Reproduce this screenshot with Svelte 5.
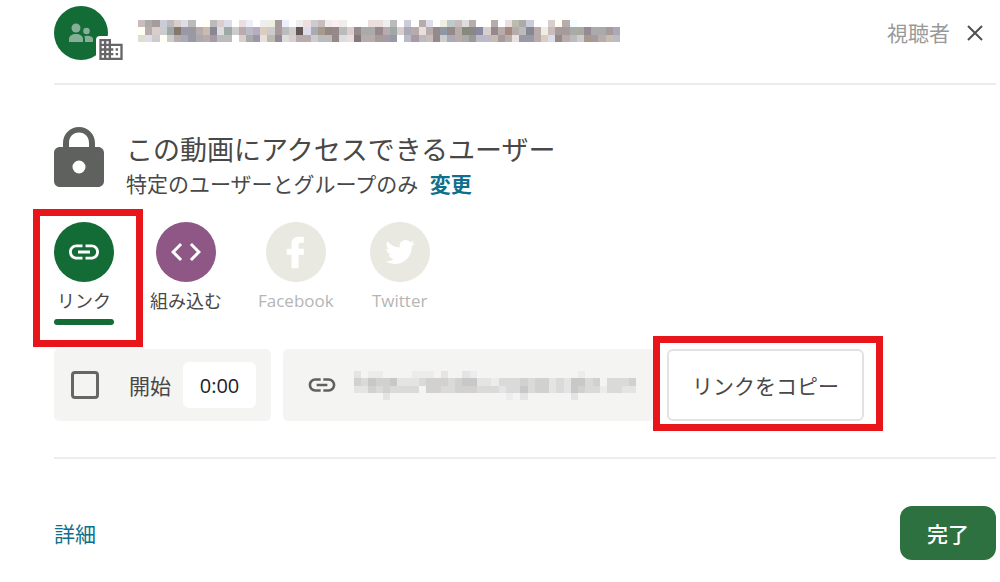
<script lang="ts">
  type Tab = { id: string; label: string; color: string; disabled: boolean };

  const LINK_PATH =
    'M3.9 12c0-1.71 1.39-3.1 3.1-3.1h4V7H7c-2.76 0-5 2.24-5 5s2.24 5 5 5h4v-1.9H7c-1.71 0-3.1-1.39-3.1-3.1zM8 13h8v-2H8v2zm9-6h-4v1.9h4c1.71 0 3.1 1.39 3.1 3.1s-1.39 3.1-3.1 3.1h-4V17h4c2.76 0 5-2.24 5-5s-2.24-5-5-5z';

  const TABS: Tab[] = [
    { id: 'link', label: 'リンク', color: '#136b36', disabled: false },
    { id: 'embed', label: '組み込む', color: '#8e5785', disabled: false },
    { id: 'facebook', label: 'Facebook', color: '#e9e9e1', disabled: true },
    { id: 'twitter', label: 'Twitter', color: '#e9e9e1', disabled: true }
  ];

  // Masked group name, one colour per cell
  const NAME_CELLS = [
    'cbb aaa a99 ccd bbb dcc dde bbb fff ffe bbb dcc dde fff edd eef fff eee eed a99 eef fff eee edd ccc cbb eee fee eee fff fff fff edd edd eee bbb fff ccd fff baa dde fff eed bcc cbb ddd baa fff fff baa fff edd bba aaa ccd fff fff dcc ffe baa eff',
    'ffe baa dcc ccc 9aa 876 99a 99a baa cba 889 ddd 9aa ccc baa bbc bac dcb ccc a99 bbb ccc 655 dde aab a98 987 988 bbb dcc 988 aaa aaa 988 baa 9aa dcc aab baa edd baa 988 89a 988 baa 887 888 88a dcc 988 baa a87 baa bbb 889 baa eed cbb a99 a99 aaa aa9 989 aaa aaa a99 aab',
    'ddc dde ccc ffe ccc baa aab 99a aaa baa a9a bbb bbb fff dcc aaa 99a edd bba 989 ddd dcc baa baa ccc bbb bbb 988 ddd edd 877 baa baa a99 a9a 99a fff bbc a9a bbb cbb 988 ccc aab baa aaa 999 bbc bbc cba a99 baa edd 99a 99a baa dcb dde 988 baa bbb ccc a98 a99 baa cba bbc'
  ].map((row) => row.split(' '));

  // Masked address, darker with each step
  const URL_CELLS = [
    '2.11....111.2..21..............1.......',
    '4354452223444345522133343442325534.3334',
    '224343333.44334443332335344232543313322',
    '....2................1.2......2........'
  ];
  const GREYS = ['#f4f4f2', '#ececec', '#e4e4e4', '#dadada', '#d2d1d0', '#c9c8c9'];

  let activeTab = 'link';
  let startChecked = false;
  let startTime = '0:00';
</script>

<main class="share">
  <header class="header">
    <div class="avatar">
      <svg class="people" viewBox="0 0 24 20" aria-hidden="true">
        <circle cx="7" cy="5" r="4.5" />
        <circle cx="17.5" cy="8" r="3.3" />
        <path d="M0 19v-3c0-3 3-5 7-5s7 2 7 5v3z" />
        <path d="M16 19v-3c0-1-.3-2-.8-2.8 2.5-1.2 8.8-.4 8.8 2.8v3z" />
      </svg>
      <span class="badge">
        <svg viewBox="2 3 20 18" aria-hidden="true">
          <path
            d="M12 7V3H2v18h20V7H12zM6 19H4v-2h2v2zm0-4H4v-2h2v2zm0-4H4V9h2v2zm0-4H4V5h2v2zm4 12H8v-2h2v2zm0-4H8v-2h2v2zm0-4H8V9h2v2zm0-4H8V5h2v2zm10 12h-8v-2h2v-2h-2v-2h2v-2h-2V9h8v10zm-2-8h-2v2h2v-2zm0 4h-2v2h2v-2z"
          />
        </svg>
      </span>
    </div>
    <svg class="masked-name" viewBox="0 0 67 3" preserveAspectRatio="none" shape-rendering="crispEdges" aria-hidden="true">
      {#each NAME_CELLS as row, y}
        {#each row as cell, x}
          <rect {x} {y} width="1" height="1" fill={`#${cell}`} />
        {/each}
      {/each}
    </svg>
    <span class="role">視聴者</span>
    <button type="button" class="close" aria-label="閉じる">
      <svg viewBox="0 0 18 18" aria-hidden="true"><path d="M2 2l14 14M16 2L2 16" /></svg>
    </button>
  </header>

  <section class="access">
    <svg class="lock" viewBox="0 0 50 60" aria-hidden="true">
      <path
        fill-rule="evenodd"
        d="M9 20v-4C9 7 16 0 25 0s16 7 16 16v4h3c3.500 0 6 2.500 6 6v28c0 3.500-2.500 6-6 6H6c-3.500 0-6-2.500-6-6V26c0-3.500 2.500-6 6-6zM15 20h20v-4c0-6-4-10.500-10-10.500S15 10 15 16zM25 33.500a6.500 6.500 0 1 0 0 13 6.500 6.500 0 0 0 0-13z"
      />
    </svg>
    <div class="access-text">
      <h1>この動画にアクセスできるユーザー</h1>
      <p>特定のユーザーとグループのみ <a href="#change">変更</a></p>
    </div>
  </section>

  <div class="tabs" role="tablist">
    {#each TABS as tab}
      <button
        type="button"
        role="tab"
        class="tab"
        class:tab-active={activeTab === tab.id}
        aria-selected={activeTab === tab.id}
        disabled={tab.disabled}
        on:click={() => (activeTab = tab.id)}
      >
        <span class="tab-icon" style:background={tab.color}>
          <svg viewBox="0 0 24 24" aria-hidden="true">
            {#if tab.id === 'link'}
              <path d={LINK_PATH} />
            {:else if tab.id === 'embed'}
              <path d="M9.4 16.6L4.8 12l4.6-4.6L8 6l-6 6 6 6 1.4-1.4zm5.2 0l4.6-4.6-4.6-4.6L16 6l6 6-6 6-1.4-1.4z" />
            {:else if tab.id === 'facebook'}
              <path d="M9 22.800V13.800H5.800V9.800H9V6.800C9 3.300 10.900 1.800 14 1.800h3.200v4h-1.800c-1.300 0-1.700.5-1.700 1.700v2.300h3.500v4h-3.500v9z" />
            {:else}
              <path
                transform="translate(2.2 2.2) scale(.82)"
                d="M23.953 4.57a10 10 0 01-2.825.775 4.958 4.958 0 002.163-2.723c-.951.555-2.005.959-3.127 1.184a4.92 4.92 0 00-8.384 4.482C7.69 8.095 4.067 6.13 1.64 3.162a4.822 4.822 0 00-.666 2.475c0 1.71.87 3.213 2.188 4.096a4.904 4.904 0 01-2.228-.616v.06a4.923 4.923 0 003.946 4.827 4.996 4.996 0 01-2.212.085 4.936 4.936 0 004.604 3.417 9.867 9.867 0 01-6.102 2.105c-.39 0-.779-.023-1.17-.067a13.995 13.995 0 007.557 2.209c9.053 0 13.998-7.496 13.998-13.985 0-.21 0-.42-.015-.63A9.935 9.935 0 0024 4.59z"
              />
            {/if}
          </svg>
        </span>
        <span class="tab-label">{tab.label}</span>
        {#if activeTab === tab.id}
          <span class="tab-bar"></span>
          <span class="marker marker-tab"></span>
        {/if}
      </button>
    {/each}
  </div>

  <div class="controls">
    <div class="panel start">
      <input id="start-at" type="checkbox" bind:checked={startChecked} />
      <label for="start-at">開始</label>
      <input class="time" type="text" aria-label="開始" bind:value={startTime} />
    </div>
    <div class="panel address">
      <svg class="address-icon" viewBox="0 0 24 24" aria-hidden="true"><path d={LINK_PATH} /></svg>
      <svg class="masked-url" viewBox="0 0 39 4" preserveAspectRatio="none" shape-rendering="crispEdges" aria-hidden="true">
        {#each URL_CELLS as row, y}
          {#each row.split('') as cell, x}
            {#if cell !== '.'}
              <rect {x} {y} width="1" height="1" fill={GREYS[Number(cell)]} />
            {/if}
          {/each}
        {/each}
      </svg>
    </div>
    <div class="copy-wrap">
      <button type="button" class="copy">リンクをコピー</button>
      <span class="marker marker-copy"></span>
    </div>
  </div>

  <footer class="footer">
    <a href="#details">詳細</a>
    <button type="button" class="done">完了</button>
  </footer>
</main>

<style>
  :global(body) {
    background: #fff;
  }

  .share {
    padding: 6px 4px 20px 54px;
    color: #484848;
    font-family: 'Open Sans', 'Noto Sans CJK JP', sans-serif;
    font-size: 21px;
  }

  button,
  input {
    font: inherit;
    color: inherit;
  }

  button {
    border: none;
    background: none;
    padding: 0;
    cursor: pointer;
  }

  a {
    color: #106f8d;
    text-decoration: none;
  }

  .header {
    display: flex;
    align-items: center;
    padding-bottom: 23px;
    border-bottom: 2px solid #ececec;
  }

  .avatar {
    position: relative;
    display: flex;
    align-items: center;
    justify-content: center;
    width: 54px;
    height: 54px;
    border-radius: 50%;
    background: #136b36;
  }

  .people {
    width: 24px;
    height: 20px;
    fill: #85b097;
  }

  .badge {
    position: absolute;
    left: 42px;
    top: 30px;
    display: flex;
    padding: 3px;
    border-radius: 4px;
    background: #fff;
  }

  .badge svg {
    width: 24px;
    height: 21px;
    fill: #666;
  }

  .masked-name {
    width: 482px;
    height: 22px;
    margin: 0 auto 4px 30px;
    filter: saturate(0.7);
  }

  .role {
    color: #999;
    line-height: 30px;
  }

  .close {
    display: flex;
    margin: 0 12px 0 16px;
  }

  .close svg {
    width: 18px;
    height: 18px;
    fill: none;
    stroke: #505050;
    stroke-width: 2;
  }

  .access {
    display: flex;
    align-items: flex-start;
    gap: 22px;
    padding-top: 42px;
  }

  .lock {
    flex: none;
    width: 50px;
    height: 60px;
    fill: #5f615f;
  }

  .access-text {
    padding-top: 5px;
  }

  h1 {
    margin: 0;
    font-size: 27px;
    font-weight: 400;
    line-height: 36px;
  }

  p {
    margin: 0;
    line-height: 32px;
  }

  p a {
    margin-left: 6px;
    font-weight: 700;
  }

  .tabs {
    display: flex;
    align-items: flex-start;
    gap: 36px;
    margin-top: 22px;
  }

  .tab {
    position: relative;
    display: flex;
    flex-direction: column;
    align-items: center;
    min-width: 60px;
    font-size: 18px;
  }

  .tab:disabled {
    color: #b5b5b5;
    font-size: 17px;
    cursor: default;
  }

  .tab-icon {
    display: flex;
    align-items: center;
    justify-content: center;
    width: 60px;
    height: 60px;
    border-radius: 50%;
  }

  .tab-icon svg {
    width: 36px;
    height: 36px;
    fill: #fff;
  }

  .tab-label {
    margin-top: 6px;
    line-height: 26px;
  }

  .tab-bar {
    width: 60px;
    height: 6px;
    margin-top: 5px;
    border-radius: 3px;
    background: #136b36;
  }

  .marker {
    position: absolute;
    border: 7px solid #e8151b;
    pointer-events: none;
  }

  .marker-tab {
    inset: -13px -29px -22px -21px;
  }

  .marker-copy {
    inset: -13px -19px -10px -14px;
  }

  .controls {
    display: flex;
    max-width: 810px;
    margin-top: 24px;
  }

  .panel {
    display: flex;
    align-items: center;
    box-sizing: border-box;
    height: 72px;
    border-radius: 5px;
    background: #f4f4f2;
  }

  .start {
    flex: none;
    padding: 0 15px 0 17px;
    margin-right: 12px;
  }

  .start input[type='checkbox'] {
    appearance: none;
    width: 28px;
    height: 28px;
    margin: 0 30px 0 0;
    border: 3px solid #666;
    border-radius: 4px;
  }

  .start input[type='checkbox']:checked {
    background: #136b36;
  }

  .time {
    box-sizing: border-box;
    width: 73px;
    height: 46px;
    margin-left: 12px;
    padding: 0;
    border: none;
    border-radius: 6px;
    background: #fff;
    color: #222;
    font-size: 20px;
    text-align: center;
  }

  .address {
    flex: 1;
    min-width: 0;
    padding: 0 18px 0 23px;
  }

  .address-icon {
    flex: none;
    width: 32px;
    height: 32px;
    margin-right: 16px;
    fill: #5f615f;
  }

  .masked-url {
    flex: 1;
    min-width: 0;
    height: 29px;
  }

  .copy-wrap {
    position: relative;
    flex: none;
    margin-left: 13px;
  }

  .copy {
    height: 72px;
    padding: 0 23px;
    border: 2px solid #e2e2e2;
    border-radius: 6px;
    background: #fff;
  }

  .footer {
    display: flex;
    align-items: center;
    justify-content: space-between;
    margin-top: 36px;
    padding-top: 47px;
    border-top: 2px solid #ececec;
  }

  .done {
    height: 54px;
    padding: 0 27px;
    border-radius: 12px;
    background: #2c713f;
    color: #fff;
    font-weight: 500;
  }
</style>
